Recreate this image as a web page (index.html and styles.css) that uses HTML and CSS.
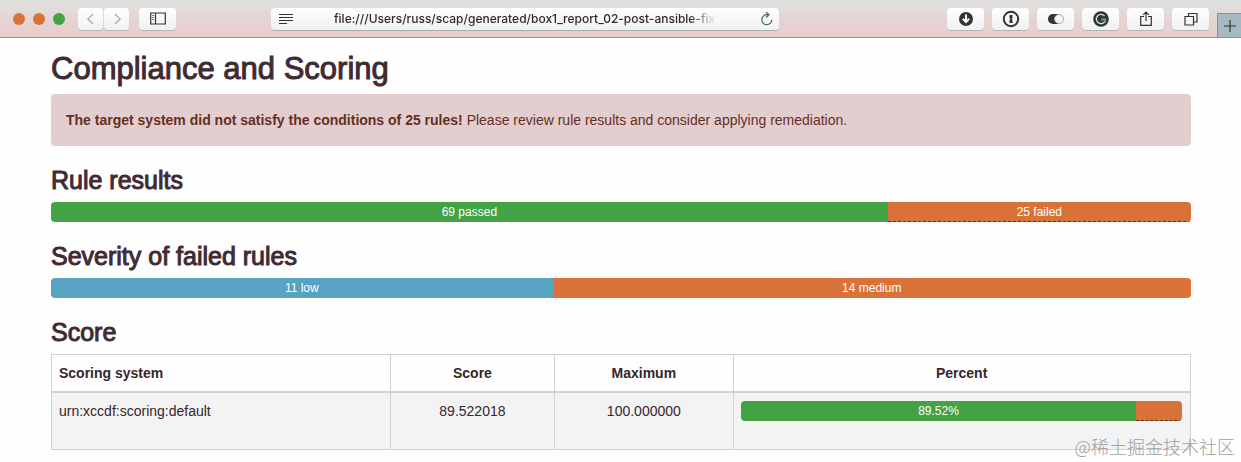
FILE: index.html
```
<!DOCTYPE html>
<html lang="en">
<head>
    <meta charset="UTF-8">
    <meta name="viewport" content="width=device-width, initial-scale=1.0">
    <title>Compliance and Scoring</title>
    <link rel="stylesheet" href="styles.css">
</head>
<body>

    <!-- Browser toolbar -->
    <header class="toolbar">
        <div class="lights">
            <button class="light" aria-label="Close"></button>
            <button class="light" aria-label="Minimize"></button>
            <button class="light green" aria-label="Zoom"></button>
        </div>
        <div class="nav-buttons">
            <button class="tool-btn nav" aria-label="Back">
                <svg width="12" height="14" viewBox="0 0 12 14"><path d="M8 2 3 7l5 5"/></svg>
            </button>
            <button class="tool-btn nav" aria-label="Forward">
                <svg width="12" height="14" viewBox="0 0 12 14"><path d="M4 2l5 5-5 5"/></svg>
            </button>
        </div>
        <button class="tool-btn" aria-label="Sidebar">
            <svg width="16" height="13" viewBox="0 0 16 13"><path d="M.7 1h14.6v11H.7zM5.5 1v11"/><path class="thin" d="M2 3.5h2M2 5.5h2M2 7.5h2"/></svg>
        </button>
        <div class="address-area">
            <div class="address">
                <svg width="14" height="12" viewBox="0 0 14 12"><path d="M0 1.5h14M0 4.5h14M0 7.5h14M0 10.5h8"/></svg>
                <input class="url" type="text" aria-label="Address" value="file:///Users/russ/scap/generated/box1_report_02-post-ansible-fix.html">
                <button class="reload" aria-label="Reload">
                    <svg width="14" height="14" viewBox="0 0 14 14"><path d="M8 2.7H6.5a5 5 0 1 0 5.3 5M6 0l3 2.7-3 2.8"/></svg>
                </button>
            </div>
        </div>
        <div class="extensions">
            <button class="tool-btn" aria-label="Downloads">
                <svg width="16" height="16" viewBox="0 0 16 16"><circle class="solid" cx="8" cy="8" r="7"/><path class="white" d="M8 3.5v7M4.8 7.8 8 11l3.2-3.2"/></svg>
            </button>
            <button class="tool-btn" aria-label="Passwords">
                <svg width="18" height="18" viewBox="0 0 18 18"><circle class="thick" cx="9" cy="9" r="7.2"/><path class="solid" d="M7.5 5h3v3l-.8 1 .8 1v3h-3v-3l.8-1-.8-1z"/></svg>
            </button>
            <button class="tool-btn" aria-label="Toggle">
                <svg width="16" height="12" viewBox="0 0 16 12"><rect class="solid" x="0" y="1" width="14" height="10" rx="5"/><circle class="knob" cx="11" cy="6" r="4.5"/></svg>
            </button>
            <button class="tool-btn" aria-label="Grammar check">
                <svg width="16" height="16" viewBox="0 0 16 16"><circle class="solid" cx="8" cy="8" r="7.8"/><path class="ring" d="M11.5 5A4.6 4.6 0 1 0 12.3 9.5"/><path class="leaf" d="M8 8.6h4v3"/></svg>
            </button>
            <button class="tool-btn" aria-label="Share">
                <svg width="12" height="16" viewBox="0 0 12 16"><path d="M4 5.5H.7v8.8h10.6V5.5H8M6 10V1M3.2 3.8 6 1l2.8 2.8"/></svg>
            </button>
            <button class="tool-btn" aria-label="Show tabs">
                <svg width="14" height="14" viewBox="0 0 14 14"><path d="M1 4.5h8.5V13H1zM4.5 4.5V1.5H13V10H9.5"/></svg>
            </button>
        </div>
        <button class="new-tab" aria-label="New tab">
            <svg width="12" height="12" viewBox="0 0 12 12"><path d="M6 0v12M0 6h12"/></svg>
        </button>
    </header>

    <!-- Report -->
    <main class="report">
        <h1>Compliance and Scoring</h1>
        <div class="alert">
            <strong>The target system did not satisfy the conditions of 25 rules!</strong>
            Please review rule results and consider applying remediation.
        </div>

        <h2>Rule results</h2>
        <div class="progress">
            <div class="bar passed" style="width: 73.4%">69 passed</div>
            <div class="bar failed dotted" style="width: 26.6%">25 failed</div>
        </div>

        <h2>Severity of failed rules</h2>
        <div class="progress">
            <div class="bar low" style="width: 44%">11 low</div>
            <div class="bar failed" style="width: 56%">14 medium</div>
        </div>

        <h2>Score</h2>
        <table class="score-table">
            <thead>
                <tr>
                    <th class="system">Scoring system</th>
                    <th class="score">Score</th>
                    <th class="maximum">Maximum</th>
                    <th class="percent">Percent</th>
                </tr>
            </thead>
            <tbody>
                <tr>
                    <td class="system">urn:xccdf:scoring:default</td>
                    <td>89.522018</td>
                    <td>100.000000</td>
                    <td>
                        <div class="progress">
                            <div class="bar passed" style="width: 89.52%">89.52%</div>
                            <div class="bar failed dotted" style="width: 10.48%"></div>
                        </div>
                    </td>
                </tr>
            </tbody>
        </table>
    </main>

    <div class="watermark" lang="zh">@稀土掘金技术社区</div>

</body>
</html>
```

FILE: styles.css
```
* {
    box-sizing: border-box;
}
body {
    margin: 0;
    position: relative;
    min-height: 100vh;
    background: #fefefe;
    color: #35262b;
    font-family: "Liberation Sans", Arial, sans-serif;
    font-size: 14px;
    line-height: 20px;
}
button {
    padding: 0;
    border: none;
    cursor: pointer;
}
svg {
    display: block;
    fill: none;
    stroke: #333;
    stroke-width: 1.2;
}

/* Browser toolbar */
.toolbar {
    display: flex;
    align-items: center;
    height: 38px;
    padding-left: 13px;
    background: linear-gradient(#dfe2df, #e5d3d3 60%, #e8cccc);
    border-bottom: 1px solid #6c9bb2;
}
.lights {
    display: flex;
    gap: 8px;
    margin-right: 13px;
}
.light {
    width: 12px;
    height: 12px;
    border-radius: 50%;
    background: #d97239;
}
.light.green {
    background: #43a243;
}
.nav-buttons {
    display: flex;
    gap: 1px;
    margin-right: 10px;
}
.tool-btn {
    display: flex;
    align-items: center;
    justify-content: center;
    width: 37px;
    height: 22px;
    border-radius: 4px;
    background: linear-gradient(#fefefe, #f0f1f0);
    box-shadow: 0 1px 0 #b5b5b5;
}
.tool-btn.nav {
    width: 25px;
}
.nav svg {
    stroke: #b0b0b0;
    stroke-width: 1.5;
}
.thin {
    stroke: #777;
    stroke-width: 1;
}
.solid {
    fill: #303632;
    stroke: none;
}
.white {
    stroke: #fff;
    stroke-width: 2;
}
.ring {
    stroke: #dfe5e0;
    stroke-width: 1.3;
}
.thick {
    stroke-width: 2;
}
.knob {
    fill: #f6f6f6;
    stroke: #aaa;
    stroke-width: 1;
}
.leaf {
    stroke: #65a878;
    stroke-width: 2;
}
.address-area {
    flex: 1;
    padding: 0 168px 0 95px;
}
.address {
    display: flex;
    align-items: center;
    height: 22px;
    padding: 0 5px 0 8px;
    border-radius: 4px;
    background: linear-gradient(#fefefe, #f1f1f1);
    box-shadow: 0 1px 0 #a9afad;
}
.url {
    flex: 1;
    min-width: 0;
    height: 20px;
    margin: 0 40px 0 41px;
    padding: 0;
    border: none;
    outline: none;
    background: none;
    color: #33272c;
    font-family: Inter, sans-serif;
    font-size: 12px;
    font-weight: 500;
    -webkit-mask-image: linear-gradient(to right, #000 92%, transparent 99%);
    mask-image: linear-gradient(to right, #000 92%, transparent 99%);
}
.reload {
    background: none;
}
.reload svg {
    stroke: #46685b;
}
.extensions {
    display: flex;
    gap: 8px;
    margin-right: 8px;
}
.new-tab {
    display: flex;
    align-items: center;
    justify-content: center;
    align-self: flex-end;
    width: 24px;
    height: 24px;
    border: 1px solid #6c9bb2;
    border-width: 1px 0 0 1px;
    background: #a5b9c2;
}

/* Report */
.report {
    padding: 14px 50px 12px 51px;
}
h1,
h2 {
    color: #3f2b31;
    font-weight: 400;
    -webkit-text-stroke: 1px #3f2b31;
}
h1 {
    margin: 0 0 9px;
    font-size: 31px;
    line-height: 33px;
}
h2 {
    margin: 21px 0 9px;
    font-size: 25px;
    line-height: 26px;
}
.alert {
    padding: 16px 15px;
    border-radius: 4px;
    background: #e4cdcf;
    color: #63301f;
}
.progress {
    display: flex;
    height: 20px;
    margin-bottom: 20px;
    border-radius: 4px;
    overflow: hidden;
}
.bar {
    color: #fff;
    font-size: 12px;
    text-align: center;
}
.passed {
    background: #43a243;
}
.failed {
    background: #d97239;
}
.low {
    background: #58a3c4;
}
.dotted {
    border-bottom: 1px dashed #5a2d1c;
}

/* Score table */
.score-table {
    width: 100%;
    table-layout: fixed;
    border-collapse: collapse;
}
.score-table th,
.score-table td {
    padding: 8px 8px 8px 7px;
    border: 1px solid #d6cfcf;
    text-align: center;
    vertical-align: top;
}
.score-table th {
    border-bottom-width: 2px;
}
.score-table tbody tr {
    background: #f3f3f3;
}
.score-table .system {
    width: 29.8%;
    text-align: left;
}
.score {
    width: 14.4%;
}
.maximum {
    width: 15.7%;
}
.percent {
    width: 40.1%;
}

.watermark {
    position: absolute;
    right: 6px;
    bottom: 6px;
    color: #a0a0a0;
    font-family: "Noto Sans CJK SC", sans-serif;
    font-size: 18px;
    font-weight: 300;
}
```
